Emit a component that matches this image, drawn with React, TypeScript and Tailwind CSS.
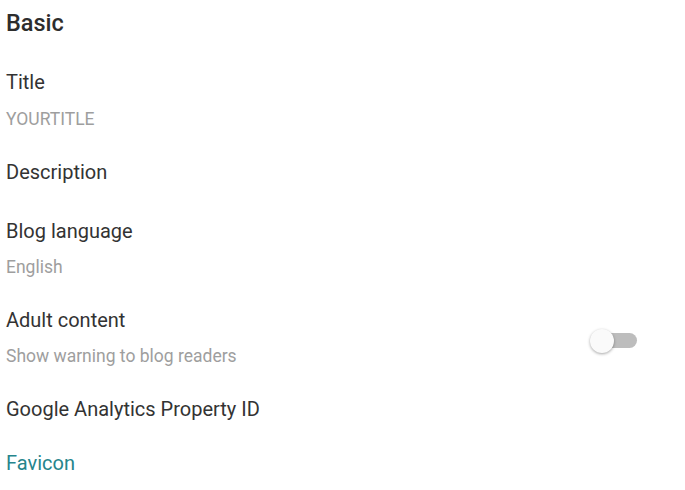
export default function App() {
  const label = "text-[20px] leading-[24px]";
  const value = "text-[17.5px] leading-[20px] text-[#9e9e9e]";
  return (
    <div className="w-[685px] h-[490px] bg-white overflow-hidden" style={{ fontFamily: "Roboto, 'Noto Sans', sans-serif" }}>
      <div className="pl-[6px] pt-[9px] pr-[48px]">
        <div className="text-[23.5px] leading-[28px] font-medium text-[#2d2d2d]">Basic</div>
        <div className={`${label} text-[#333333] mt-[33px]`}>Title</div>
        <div className={`${value} mt-[15px]`}>YOURTITLE</div>
        <div className={`${label} text-[#333333] mt-[31px]`}>Description</div>
        <div className={`${label} text-[#333333] mt-[35px]`}>Blog language</div>
        <div className={`${value} mt-[14px]`}>English</div>
        <div className="flex items-center justify-between mt-[31px]">
          <div>
            <div className={`${label} text-[#333333]`}>Adult content</div>
            <div className={`${value} mt-[14px]`}>Show warning to blog readers</div>
          </div>
          <div className="relative w-[47px] h-[24px] mt-[8px]">
            <div className="absolute left-[10px] right-0 top-[4px] h-[15px] rounded-full bg-[#bdbdbd]" />
            <div className="absolute left-0 top-0 w-[24px] h-[24px] rounded-full bg-[#fafafa] shadow-[0_1px_3px_rgba(0,0,0,0.35)]" />
          </div>
        </div>
        <div className={`${label} text-[#333333] mt-[31px]`}>Google Analytics Property ID</div>
        <div className={`${label} text-[#26858c] mt-[30px]`}>Favicon</div>
      </div>
    </div>
  );
}
